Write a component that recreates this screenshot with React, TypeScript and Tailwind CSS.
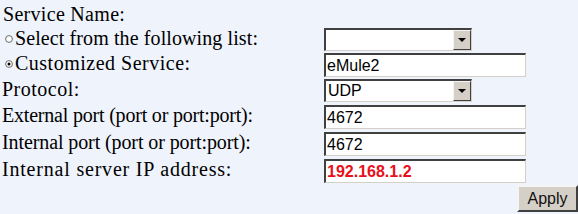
import React from 'react';

function Radio({ checked }: { checked?: boolean }) {
  return (
    <svg width="8" height="8" viewBox="0 0 8 8" className="ml-[5px] mr-[2px] shrink-0">
      <circle cx="4" cy="4" r="3.4" fill="#fff" stroke="#5a5a5a" strokeWidth="0.9" />
      {checked && <circle cx="4" cy="4" r="1.5" fill="#000" />}
    </svg>
  );
}

function Select({ value }: { value?: string }) {
  return (
    <div className="mt-[1px] flex h-[23px] w-[148px] border-t-2 border-l-2 border-[#404040] border-b border-r border-b-[#d4d0c8] border-r-[#d4d0c8] bg-white">
      <div className="flex-1 pl-[2px] text-[16px] leading-[20px] text-black font-['Liberation_Sans',Arial,sans-serif]">
        {value}
      </div>
      <div className="flex w-[18px] items-center justify-center border border-t-[#f4f4f4] border-l-[#f4f4f4] border-b-[#404040] border-r-[#404040] bg-[#d4d0c8]">
        <svg width="8" height="4" viewBox="0 0 8 4">
          <polygon points="0,0 8,0 4,4" fill="#000" />
        </svg>
      </div>
    </div>
  );
}

function Input({ value, ip }: { value: string; ip?: boolean }) {
  return (
    <div
      className={`mt-[1px] flex h-[24px] w-[202px] items-center border-t-2 border-l-2 border-[#404040] border-b border-r border-b-[#d4d0c8] border-r-[#d4d0c8] bg-white pl-[1px] text-[16px] font-['Liberation_Sans',Arial,sans-serif] ${
        ip ? 'font-bold text-[#e8101a]' : 'text-black'
      }`}
    >
      {value}
    </div>
  );
}

export default function App() {
  return (
    <div className="h-[214px] w-[578px] overflow-hidden bg-[#eff3fc] text-[20px] leading-[23px] text-black font-['Liberation_Serif','Times_New_Roman',serif]">
      <div className="grid grid-cols-[324px_1fr] grid-rows-[27px_25px_26px_26px_27px_27px_27px] items-start">
        <div className="pl-[3px] pt-[3px] tracking-[0.3px]">Service Name:</div>
        <div />

        <div className="flex items-center">
          <Radio />
          <span className="tracking-[0.1px]">Select from the following list:</span>
        </div>
        <Select />

        <div className="flex items-center">
          <Radio checked />
          <span className="tracking-[0.5px]">Customized Service:</span>
        </div>
        <Input value="eMule2" />

        <div className="pl-[2px] tracking-[0.5px]">Protocol:</div>
        <Select value="UDP" />

        <div className="pl-[2px] tracking-[-0.2px]">External port (port or port:port):</div>
        <Input value="4672" />

        <div className="pl-[2px] tracking-[-0.1px]">Internal port (port or port:port):</div>
        <Input value="4672" />

        <div className="pl-[2px] tracking-[0.8px]">Internal server IP address:</div>
        <Input value="192.168.1.2" ip />
      </div>
      <div className="flex justify-end">
        <button className="h-[27px] w-[61px] border-t-2 border-l-2 border-t-[#f4f4f4] border-l-[#f4f4f4] border-b-2 border-r-2 border-b-[#404040] border-r-[#404040] bg-[#d4d0c8] text-[16px] text-[#111] font-['Liberation_Sans',Arial,sans-serif]">
          Apply
        </button>
      </div>
    </div>
  );
}
